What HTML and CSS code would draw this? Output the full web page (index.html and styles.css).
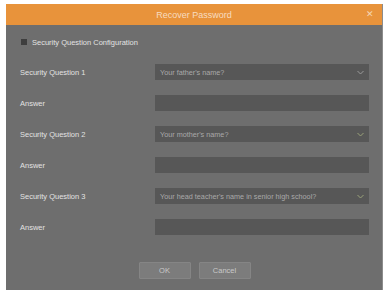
FILE: index.html
```html
<!DOCTYPE html>
<html lang="en">
<head>
  <meta charset="UTF-8">
  <title>Recover Password</title>
  <link rel="stylesheet" href="styles.css">
</head>
<body>

  <div class="dialog">
    <div class="title-bar">
      <span class="title">Recover Password</span>
      <span class="close">&#x2715;</span>
    </div>

    <div class="dialog-body">
      <label class="config">
        <span class="check"></span>
        Security Question Configuration
      </label>

      <div class="form-grid">
        <div class="label">Security Question 1</div>
        <div class="field select">
          <span>Your father's name?</span>
          <svg class="chev" width="7" height="5" viewBox="0 0 7 5"><path d="M0.5 1 L3.5 4 L6.5 1" fill="none" stroke="#9a9a9a" stroke-width="1"/></svg>
        </div>

        <div class="label">Answer</div>
        <div class="field"></div>

        <div class="label">Security Question 2</div>
        <div class="field select">
          <span>Your mother's name?</span>
          <svg class="chev" width="7" height="5" viewBox="0 0 7 5"><path d="M0.5 1 L3.5 4 L6.5 1" fill="none" stroke="#9aa27a" stroke-width="1"/></svg>
        </div>

        <div class="label">Answer</div>
        <div class="field"></div>

        <div class="label">Security Question 3</div>
        <div class="field select">
          <span>Your head teacher's name in senior high school?</span>
          <svg class="chev" width="7" height="5" viewBox="0 0 7 5"><path d="M0.5 1 L3.5 4 L6.5 1" fill="none" stroke="#9aa27a" stroke-width="1"/></svg>
        </div>

        <div class="label">Answer</div>
        <div class="field"></div>
      </div>

      <div class="actions">
        <button class="btn">OK</button>
        <button class="btn">Cancel</button>
      </div>
    </div>
  </div>

</body>
</html>
```

FILE: styles.css
```css
body {
  margin: 0;
  padding: 4px 0 0 6px;
  background: #ffffff;
  font-family: "Liberation Sans", Arial, sans-serif;
}

.dialog {
  width: 377px;
  height: 286px;
  background: #6e6e6e;
  border-right: 1px solid #8c8c8c;
  box-sizing: border-box;
  display: flex;
  flex-direction: column;
}

.title-bar {
  height: 21px;
  background: #e8933b;
  display: flex;
  align-items: center;
  justify-content: center;
  position: relative;
}

.title {
  font-size: 9px;
  color: #f7dcc0;
}

.close {
  position: absolute;
  right: 8px;
  top: 5px;
  font-size: 9px;
  color: #f5d6b4;
}

.dialog-body {
  padding: 10px 13px 11px 14px;
  flex: 1;
  display: flex;
  flex-direction: column;
}

.config {
  display: flex;
  align-items: center;
  gap: 5px;
  height: 14px;
  padding-left: 1px;
  font-size: 7.5px;
  color: #e2e2e2;
}

.check {
  width: 6px;
  height: 6px;
  background: #3e3e3e;
}

.form-grid {
  margin-top: 15px;
  display: grid;
  grid-template-columns: 135px 214px;
  grid-auto-rows: 16px;
  row-gap: 15px;
  align-items: center;
}

.label {
  font-size: 7.5px;
  color: #e2e2e2;
}

.field {
  height: 16px;
  background: #575757;
  box-sizing: border-box;
}

.select {
  display: flex;
  align-items: center;
  justify-content: space-between;
  padding: 0 5px 0 5px;
  font-size: 7.25px;
  color: #a9a9a9;
}

.chev {
  display: block;
}

.actions {
  margin-top: auto;
  display: flex;
  justify-content: center;
  gap: 8px;
}

.btn {
  width: 52px;
  height: 17px;
  padding: 0;
  font-family: "Liberation Sans", Arial, sans-serif;
  font-size: 7.5px;
  color: #c9c9c9;
  background: #7c7c7c;
  border: 1px solid #858585;
  border-radius: 1px;
}
```
